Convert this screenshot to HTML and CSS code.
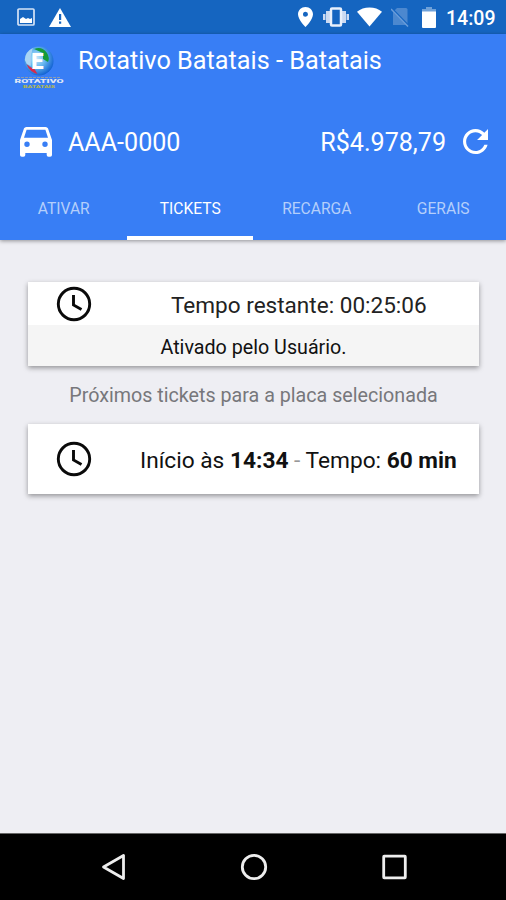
FILE: index.html
```html
<!DOCTYPE html>
<html lang="pt-br">
<head>
  <meta charset="UTF-8" />
  <title>Rotativo Batatais</title>
  <meta name="viewport" content="width=device-width, initial-scale=1.0" />
  <link rel="stylesheet" href="styles.css">
</head>
<body>
  <div class="status-bar">
    <svg class="ic-imagem" width="18" height="18" viewBox="0 0 18 18">
      <rect x="1" y="1" width="16" height="16" rx="1" fill="none" stroke="#d5e3f6" stroke-width="1.7" />
      <path d="M3 15v-4l3-2 3 2 2-1 2 1 2-1v5z" fill="#fff" />
    </svg>
    <svg class="ic-alerta" width="22" height="19" viewBox="0 0 22 19">
      <path d="M11 0L22 19H0z" fill="#fff" />
      <path d="M10 6h2.200v6H10zM10 13.500h2.200v2.300H10z" fill="#1565c0" />
    </svg>
    <div class="status-direita">
      <svg width="15" height="20" viewBox="0 0 15 20">
        <path d="M7.500 0C3.300 0 0 3.200 0 7.200 0 12.500 7.500 20 7.500 20S15 12.500 15 7.200C15 3.200 11.700 0 7.500 0zm0 9.700a2.500 2.500 0 1 1 0-5 2.500 2.500 0 0 1 0 5z" fill="#fff" />
      </svg>
      <svg class="ic-vibrar" width="26" height="20" viewBox="0 0 26 20">
        <path d="M0 7h2.500v6H0zM23.500 7H26v6h-2.500zM3 4h4v12H3zM19 4h4v12h-4z" fill="#cbdaf2" />
        <rect x="8" y="1.500" width="10" height="17" rx="1" fill="none" stroke="#e8f0fc" stroke-width="2.500" />
      </svg>
      <svg class="ic-wifi" width="25" height="20" viewBox="0 0 26 20">
        <path d="M13 20L0 4.500C3.500 1.500 8 0 13 0s9.500 1.500 13 4.500z" fill="#fff" />
      </svg>
      <svg class="ic-chip" width="18" height="20" viewBox="0 0 18 20">
        <path d="M6 1h9q1.500 0 1.500 1.500V18H2V5z" fill="#4c88cf" />
        <path d="M0 1l17.500 18" stroke="#1565c0" stroke-width="2.500" />
        <path d="M0 2l17 17.500" stroke="#6b9edb" stroke-width="1.500" />
      </svg>
      <svg class="ic-bateria" width="14" height="21" viewBox="0 0 14 21">
        <path d="M4 0h6v2h4v4H0V2h4z" fill="#70a1d8" />
        <path d="M0 4.500h14V20q0 1-1 1H1q-1 0-1-1z" fill="#fff" />
      </svg>
      <span class="hora">14:09</span>
    </div>
  </div>

  <header class="topo">
    <div class="titulo">
      <svg class="logo" width="50" height="44" viewBox="0 0 50 44">
        <defs>
          <radialGradient id="esfera" cx="42%" cy="40%" r="62%">
            <stop offset="0" stop-color="#c9eafb" />
            <stop offset=".5" stop-color="#64b5ef" />
            <stop offset="1" stop-color="#1262d2" />
          </radialGradient>
        </defs>
        <circle cx="25" cy="15" r="14.500" fill="url(#esfera)" />
        <path d="M20 3q8-3 13 4 3 5 1 9l-5-3V7z" fill="#159b3b" />
        <path d="M12.500 18q3 8 11 10l-3-5q-4-1-8-5z" fill="#d72a4b" />
        <path d="M10.800 14q0-8 8-12l-2 8v10l-4-2z" fill="#a9d4f4" />
        <text class="logo-letra" x="23.500" y="22.500" text-anchor="middle">E</text>
        <path d="M3 31.500h44" stroke="#8d9cae" stroke-width="1" stroke-dasharray="3 1" />
        <text class="logo-nome" x="25" y="37" text-anchor="middle" textLength="49" lengthAdjust="spacingAndGlyphs">ROTATIVO</text>
        <text class="logo-cidade" x="25" y="41.500" text-anchor="middle" textLength="32" lengthAdjust="spacingAndGlyphs">BATATAIS</text>
      </svg>
      <h1>Rotativo Batatais - Batatais</h1>
    </div>

    <div class="conta">
      <svg class="carro" width="32" height="30" viewBox="0 0 32 30">
        <path fill-rule="evenodd" d="M28.300 2.200C28 1 27 0 25.500 0h-19C5 0 4 1 3.700 2.200L0 13v15q0 1.800 1.800 1.800h1.700q1.800 0 1.800-1.800v-2h21.400v2q0 1.800 1.800 1.800h1.700q1.800 0 1.800-1.800V13zM6.600 2.700h18.800l2.600 8H4zM7 20a2.700 2.700 0 1 1 0-5.400A2.700 2.700 0 0 1 7 20zm18 0a2.700 2.700 0 1 1 0-5.400 2.700 2.700 0 0 1 0 5.400z" fill="#fff" />
      </svg>
      <span class="placa">AAA-0000</span>
      <span class="saldo">R$4.978,79</span>
      <svg class="atualizar" width="25" height="25" viewBox="4 4 16 16">
        <path d="M17.650 6.350C16.200 4.900 14.210 4 12 4c-4.420 0-7.990 3.580-7.990 8s3.570 8 7.990 8c3.730 0 6.840-2.550 7.730-6h-2.080c-.82 2.330-3.040 4-5.650 4-3.310 0-6-2.690-6-6s2.690-6 6-6c1.660 0 3.140.69 4.220 1.780L13 11h7V4l-2.350 2.350z" fill="#fff" />
      </svg>
    </div>

    <nav class="abas">
      <a>ATIVAR</a>
      <a class="ativa">TICKETS</a>
      <a>RECARGA</a>
      <a>GERAIS</a>
    </nav>
  </header>

  <main>
    <section class="card">
      <div class="card-linha">
        <svg class="relogio" width="36" height="36" viewBox="0 0 36 36">
          <circle cx="18" cy="18" r="15.700" />
          <path d="M17.500 9v10l8 4.500" />
        </svg>
        <span class="restante">Tempo restante: 00:25:06</span>
      </div>
      <div class="card-rodape">Ativado pelo Usuário.</div>
    </section>

    <p class="proximos">Próximos tickets para a placa selecionada</p>

    <section class="card card-proximo">
      <svg class="relogio" width="36" height="36" viewBox="0 0 36 36">
        <circle cx="18" cy="18" r="15.700" />
        <path d="M17.500 9v10l8 4.500" />
      </svg>
      <span class="inicio">Início às <b>14:34</b> <i>-</i> Tempo: <b>60 min</b></span>
    </section>
  </main>

  <footer class="nav-bar">
    <svg width="25" height="28" viewBox="0 0 25 28"><path d="M22.500 2.500v23L2.500 14z" /></svg>
    <svg width="28" height="28" viewBox="0 0 28 28"><circle cx="14" cy="14" r="11.700" /></svg>
    <svg width="25" height="28" viewBox="0 0 25 28"><rect x="1.700" y="3.200" width="21.600" height="21.600" rx=".5" /></svg>
  </footer>
</body>
</html>
```

FILE: styles.css
```css
* {
  box-sizing: border-box;
}
body {
  display: flex;
  flex-direction: column;
  height: 900px;
  margin: 0;
  background-color: #eeeef3;
  color: #111;
  font-family: Roboto, sans-serif;
  overflow: hidden;
}
svg {
  display: block;
  flex: none;
}
.status-bar {
  display: flex;
  align-items: center;
  height: 34px;
  padding: 0 11px 0 17px;
  background-color: #1565c0;
}
.ic-alerta {
  margin-left: 14px;
}
.status-direita {
  display: flex;
  align-items: center;
  margin-left: auto;
}
.ic-vibrar {
  margin-left: 10px;
}
.ic-wifi {
  margin-left: 8px;
}
.ic-chip {
  margin-left: 9px;
}
.ic-bateria {
  margin-left: 13px;
}
.hora {
  width: 49px;
  margin-left: 10px;
  padding-top: 3px;
  color: #fff;
  font-size: 19.5px;
  font-weight: 500;
  line-height: 34px;
  white-space: nowrap;
}
.topo {
  position: relative;
  height: 206px;
  background-color: #387ef5;
  color: #fff;
  box-shadow: 0 1px 4px rgba(0, 0, 0, .4);
}
.titulo {
  display: flex;
  height: 70px;
  padding: 12px 0 0 14px;
}
.logo-letra {
  fill: #fff;
  font-size: 22px;
  font-weight: 900;
}
.logo-nome {
  fill: #e0e7f6;
  font-size: 6px;
  font-weight: 900;
}
.logo-cidade {
  fill: #b3b654;
  font-size: 4px;
  font-weight: 900;
}
h1 {
  margin: 0 0 0 14px;
  font-size: 25.25px;
  font-weight: 400;
  line-height: 29px;
  white-space: nowrap;
}
.conta {
  display: flex;
  align-items: center;
  height: 74px;
  padding: 0 18px 0 20px;
  font-size: 25.1px;
}
.carro {
  margin-top: 2px;
}
.placa {
  margin-left: 16px;
  padding-top: 2px;
}
.saldo {
  margin-left: auto;
  padding-top: 2px;
}
.atualizar {
  margin-left: 17px;
}
.abas {
  display: grid;
  grid-template-columns: repeat(4, 1fr);
  height: 62px;
}
.abas a {
  height: 62px;
  padding-left: 1px;
  border-bottom: 4px solid transparent;
  color: #b4cffb;
  font-size: 15.6px;
  line-height: 63px;
  text-align: center;
}
.abas .ativa {
  border-color: #fff;
  color: #fff;
}
main {
  flex: 1;
  padding: 42px 27px 0 28px;
}
.card {
  background-color: #fff;
  box-shadow: 0 2px 5px rgba(0, 0, 0, .38);
}
.card-linha {
  display: flex;
  align-items: center;
  height: 43px;
  padding-left: 28px;
}
.relogio {
  fill: none;
  stroke: #0a0a0a;
  stroke-width: 2.9;
}
.restante {
  margin-left: 79px;
  padding-top: 3px;
  color: #222;
  font-size: 22.55px;
  white-space: nowrap;
}
.card-rodape {
  height: 41px;
  background-color: #f5f5f5;
  font-size: 19.7px;
  line-height: 45px;
  text-align: center;
}
.proximos {
  margin: 0;
  height: 58px;
  color: #77777b;
  font-size: 19.7px;
  line-height: 59px;
  text-align: center;
  white-space: nowrap;
}
.card-proximo {
  display: flex;
  align-items: center;
  height: 70px;
  padding-left: 28px;
}
.inicio {
  margin-left: 48px;
  padding-top: 3px;
  font-size: 22.7px;
  white-space: nowrap;
}
.inicio i {
  color: #999;
  font-style: normal;
}
.nav-bar {
  display: flex;
  align-items: center;
  justify-content: space-between;
  height: 67px;
  padding: 0 99px 0 101px;
  border-top: 1px solid #666;
  background-color: #000;
}
.nav-bar svg {
  fill: none;
  stroke: #eee;
  stroke-width: 2.8;
  stroke-linejoin: round;
}
```
